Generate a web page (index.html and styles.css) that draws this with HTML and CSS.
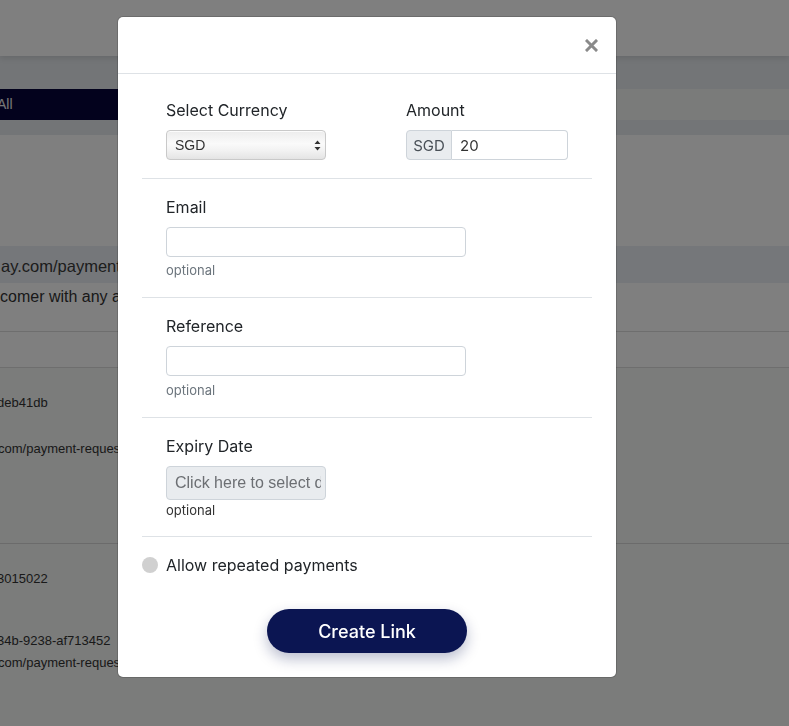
FILE: index.html
```html
<!DOCTYPE html>
<html lang="en">
<head>
  <meta charset="UTF-8" />
  <meta name="viewport" content="width=device-width, initial-scale=1.0"/>
  <title>Payment Links</title>
  <link rel="stylesheet" href="styles.css">
</head>
<body>
  <div class="page">
    <header class="topbar"></header>

    <div class="tabs">
      <div class="tab-strip">
        <span class="tab active">All</span>
      </div>
    </div>

    <div class="spacer"></div>

    <div class="links">
      <div class="links-head">ay.com/payment-requests/new</div>
      <div class="links-note">comer with any amount</div>
      <div class="links-blank"></div>
      <div class="link-row">
        <div class="link-id">deb41db</div>
        <div class="link-url">com/payment-requests/9d0b</div>
      </div>
      <div class="link-row last">
        <div class="link-id">3015022</div>
        <div class="link-ref">34b-9238-af713452</div>
        <div class="link-url tight">com/payment-requests/34b</div>
      </div>
    </div>
  </div>

  <div class="backdrop">
    <div class="modal">
      <div class="modal-header">
        <button class="close" aria-label="Close">
          <svg width="13" height="13" viewBox="0 0 13 13">
            <path d="M2 2 L11 11 M11 2 L2 11" stroke="#8a8a8a" stroke-width="3" stroke-linecap="square"/>
          </svg>
        </button>
      </div>

      <div class="modal-body">
        <div class="section first two-col">
          <div class="field">
            <label for="currency">Select Currency</label>
            <div class="select-wrap">
              <select id="currency"><option>SGD</option></select>
              <svg class="select-arrows" width="7" height="11" viewBox="0 0 7 11">
                <path d="M3.5 0.5 L6.5 4 L0.5 4 Z M3.5 10.5 L6.5 7 L0.5 7 Z" fill="#333"/>
              </svg>
            </div>
          </div>
          <div class="field">
            <label for="amount">Amount</label>
            <div class="input-group">
              <span class="addon">SGD</span>
              <input type="text" id="amount" value="20" size="4" />
            </div>
          </div>
        </div>

        <div class="section">
          <label for="email">Email</label>
          <input type="email" id="email" class="text-input" />
          <small class="hint">optional</small>
        </div>

        <div class="section">
          <label for="reference">Reference</label>
          <input type="text" id="reference" class="text-input" />
          <small class="hint loose">optional</small>
        </div>

        <div class="section last">
          <label for="expiry">Expiry Date</label>
          <input type="text" id="expiry" class="date-input" placeholder="Click here to select date" readonly />
          <small class="hint dark">optional</small>
        </div>

        <div class="toggle-row">
          <span class="toggle-knob"></span>
          <span>Allow repeated payments</span>
        </div>

        <div class="actions">
          <button type="submit" class="btn-create">Create Link</button>
        </div>
      </div>
    </div>
  </div>
</body>
</html>
```

FILE: styles.css
```css
body {
  margin: 0;
  font-family: Inter, "Liberation Sans", sans-serif;
  color: #212529;
  background: #fff;
  overflow: hidden;
}

/* page behind the modal */
.page {
  height: 726px;
  background: #f6f8f6;
  font-family: "Liberation Sans", sans-serif;
}

.topbar {
  height: 56px;
  background: #fff;
  box-shadow: 0 2px 6px rgba(0, 0, 0, 0.12);
  position: relative;
  z-index: 1;
}

.tabs {
  background: #e6eaee;
  padding: 33px 0 15px;
}

.tab-strip {
  height: 31px;
  background: #f4f7f4;
}

.tab {
  display: inline-block;
  width: 220px;
  height: 31px;
  line-height: 31px;
  background: #06043a;
  color: #eee;
  font-size: 14px;
  text-indent: -3px;
}

.spacer {
  height: 111px;
  background: #fff;
}

.links {
  font-size: 15px;
  color: #333;
  white-space: nowrap;
}

.links-head {
  height: 37px;
  line-height: 40px;
  background: #eaeef4;
  font-size: 16.5px;
  text-indent: 1px;
  color: #3a3a3a;
}

.links-note {
  height: 48px;
  line-height: 28px;
  background: #fff;
  border-bottom: 1px solid #dcdcdc;
  font-size: 16px;
}

.links-blank {
  height: 35px;
  background: #fff;
  border-bottom: 1px solid #dcdcdc;
}

.link-row {
  height: 176px;
  box-sizing: border-box;
  padding-top: 25px;
  border-bottom: 1px solid #d6d6d6;
  font-size: 13px;
}

.link-row.last {
  border-bottom: none;
}

.link-id {
  margin-left: -3px;
  line-height: 20px;
}

.link-url {
  margin-top: 26px;
  line-height: 20px;
  margin-left: -2px;
}

.link-ref {
  margin-top: 42px;
  line-height: 20px;
  margin-left: -3px;
}

.link-url.tight {
  margin-top: 2px;
}

/* modal */
.backdrop {
  position: fixed;
  inset: 0;
  z-index: 10;
  background: rgba(0, 0, 0, 0.5);
}

.modal {
  width: 498px;
  margin: 17px 0 0 118px;
  background: #fff;
  border-radius: 5px;
  box-shadow: 0 0 0 1px rgba(0, 0, 0, 0.15);
}

.modal-header {
  height: 56px;
  display: flex;
  align-items: center;
  justify-content: flex-end;
  padding-right: 18px;
  border-bottom: 1px solid #dee2e6;
}

.close {
  background: none;
  border: none;
  padding: 0;
  cursor: pointer;
  display: flex;
}

.modal-body {
  padding: 0 24px 24px;
}

.section {
  padding: 16px 24px 18px;
  border-bottom: 1px solid #dee2e6;
  display: flex;
  flex-direction: column;
  align-items: flex-start;
}

.section.first {
  padding-top: 24px;
}

.section.last {
  padding-bottom: 17px;
}

.two-col {
  display: grid;
  grid-template-columns: 240px minmax(0, 1fr);
}

.field {
  display: flex;
  flex-direction: column;
  min-width: 0;
}

label {
  display: block;
  font-size: 16px;
  line-height: 24px;
  margin-bottom: 8px;
  color: #212529;
}

.select-wrap {
  position: relative;
  width: 160px;
}

.select-wrap select {
  appearance: none;
  -webkit-appearance: none;
  width: 160px;
  height: 30px;
  padding: 0 8px;
  border: 1px solid #c9c9c9;
  border-radius: 4px;
  background: linear-gradient(#ececec, #fafafa 45%, #f2f2f2 70%, #e4e4e4);
  box-shadow: inset 0 1px 0 rgba(255, 255, 255, 0.8);
  font-family: "Liberation Sans", sans-serif;
  font-size: 14px;
  color: #333;
}

.select-arrows {
  position: absolute;
  right: 5px;
  top: 10px;
}

.input-group {
  display: flex;
  height: 30px;
  width: 162px;
}

.addon {
  width: 44px;
  flex: none;
  display: flex;
  align-items: center;
  justify-content: center;
  background: #e9ecef;
  border: 1px solid #ced4da;
  border-radius: 4px 0 0 4px;
  font-size: 15px;
  color: #495057;
}

.input-group input {
  flex: 1;
  width: 0;
  min-width: 0;
  border: 1px solid #ced4da;
  border-left: none;
  border-radius: 0 4px 4px 0;
  padding: 0 8px;
  font-family: Inter, sans-serif;
  font-size: 15px;
  color: #333;
}

.text-input {
  width: 300px;
  height: 30px;
  box-sizing: border-box;
  border: 1px solid #ced4da;
  border-radius: 4px;
  padding: 0 8px;
  font-size: 15px;
}

.date-input {
  width: 160px;
  height: 34px;
  box-sizing: border-box;
  border: 1px solid #ced4da;
  border-radius: 4px;
  padding: 0 4px 0 8px;
  background: #e9ecef;
  font-family: "Liberation Sans", sans-serif;
  font-size: 16px;
}

.date-input::placeholder {
  color: #6c6f73;
}

.hint {
  display: block;
  font-size: 13px;
  line-height: 18px;
  margin-top: 4px;
  color: #6c757d;
}

.hint.loose {
  margin-top: 5px;
}

.hint.dark {
  margin-top: 1px;
  color: #333;
}

.toggle-row {
  display: flex;
  align-items: center;
  gap: 8px;
  padding-top: 16px;
  height: 24px;
  font-size: 16px;
  line-height: 24px;
}

.toggle-knob {
  width: 16px;
  height: 16px;
  border-radius: 50%;
  background: #d0d0d0;
}

.actions {
  display: flex;
  justify-content: center;
  margin-top: 32px;
}

.btn-create {
  width: 200px;
  height: 44px;
  border: none;
  border-radius: 22px;
  background: #0b1552;
  color: #fff;
  font-family: Inter, sans-serif;
  font-size: 18px;
  font-weight: 500;
  box-shadow: 0 6px 14px rgba(11, 21, 82, 0.28);
  cursor: pointer;
}
```
